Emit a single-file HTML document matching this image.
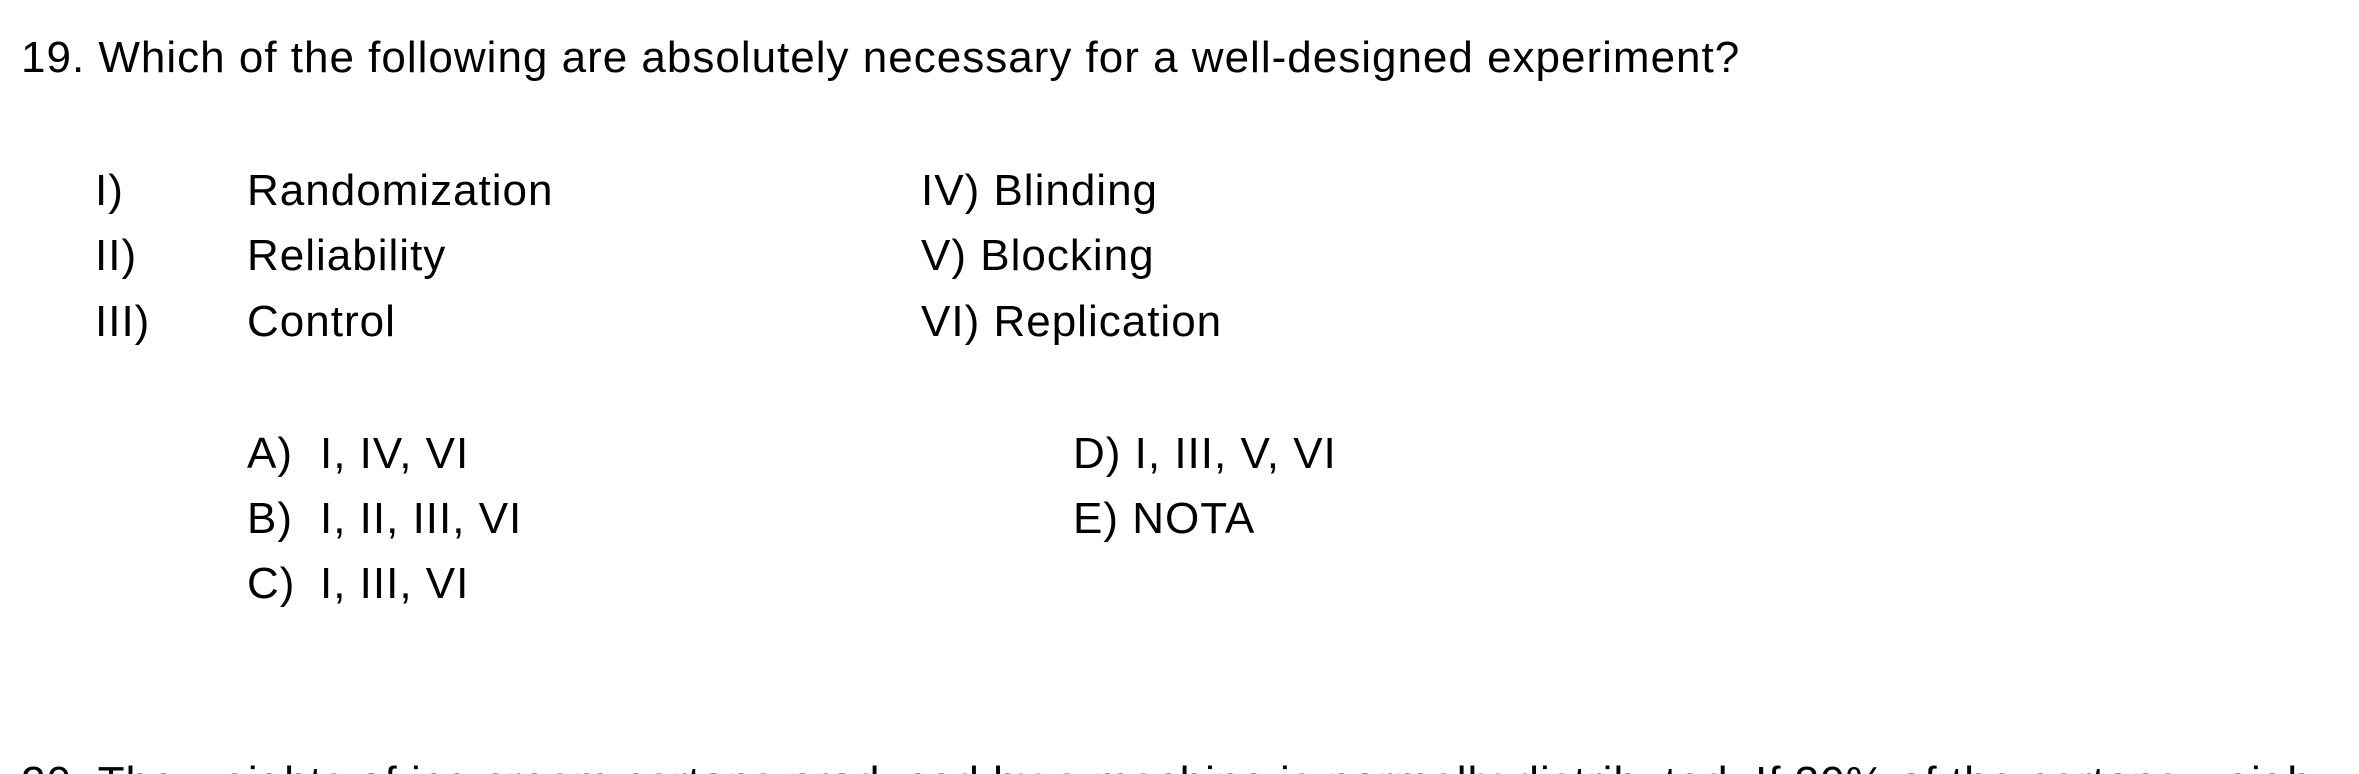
<!DOCTYPE html>
<html><head><meta charset="utf-8"><style>
html{height:774px;overflow:hidden;}
html,body{margin:0;padding:0;background:#fff;}
body{width:2359px;height:774px;position:relative;overflow:hidden;font-family:"Liberation Sans",sans-serif;font-size:44px;letter-spacing:1px;color:#000;}
.t{position:absolute;line-height:44px;white-space:nowrap;}
</style></head><body>
<div class="t" style="left:21px;top:36px;">19. Which of the following are absolutely necessary for a well-designed experiment?</div>

<div class="t" style="left:95px;top:169px;">I)</div>
<div class="t" style="left:247px;top:169px;">Randomization</div>
<div class="t" style="left:921px;top:169px;">IV) Blinding</div>

<div class="t" style="left:95px;top:234px;">II)</div>
<div class="t" style="left:247px;top:234px;">Reliability</div>
<div class="t" style="left:921px;top:234px;">V) Blocking</div>

<div class="t" style="left:95px;top:300px;">III)</div>
<div class="t" style="left:247px;top:300px;">Control</div>
<div class="t" style="left:921px;top:300px;">VI) Replication</div>

<div class="t" style="left:247px;top:432px;">A)</div>
<div class="t" style="left:320px;top:432px;">I, IV, VI</div>
<div class="t" style="left:1073px;top:432px;">D) I, III, V, VI</div>

<div class="t" style="left:247px;top:497px;">B)</div>
<div class="t" style="left:320px;top:497px;">I, II, III, VI</div>
<div class="t" style="left:1073px;top:497px;">E) NOTA</div>

<div class="t" style="left:247px;top:562px;">C)</div>
<div class="t" style="left:320px;top:562px;">I, III, VI</div>

<div class="t" style="left:21px;top:761px;">20. The weights of ice cream cartons produced by a machine is normally distributed. If 30% of the cartons weigh</div>
</body></html>
